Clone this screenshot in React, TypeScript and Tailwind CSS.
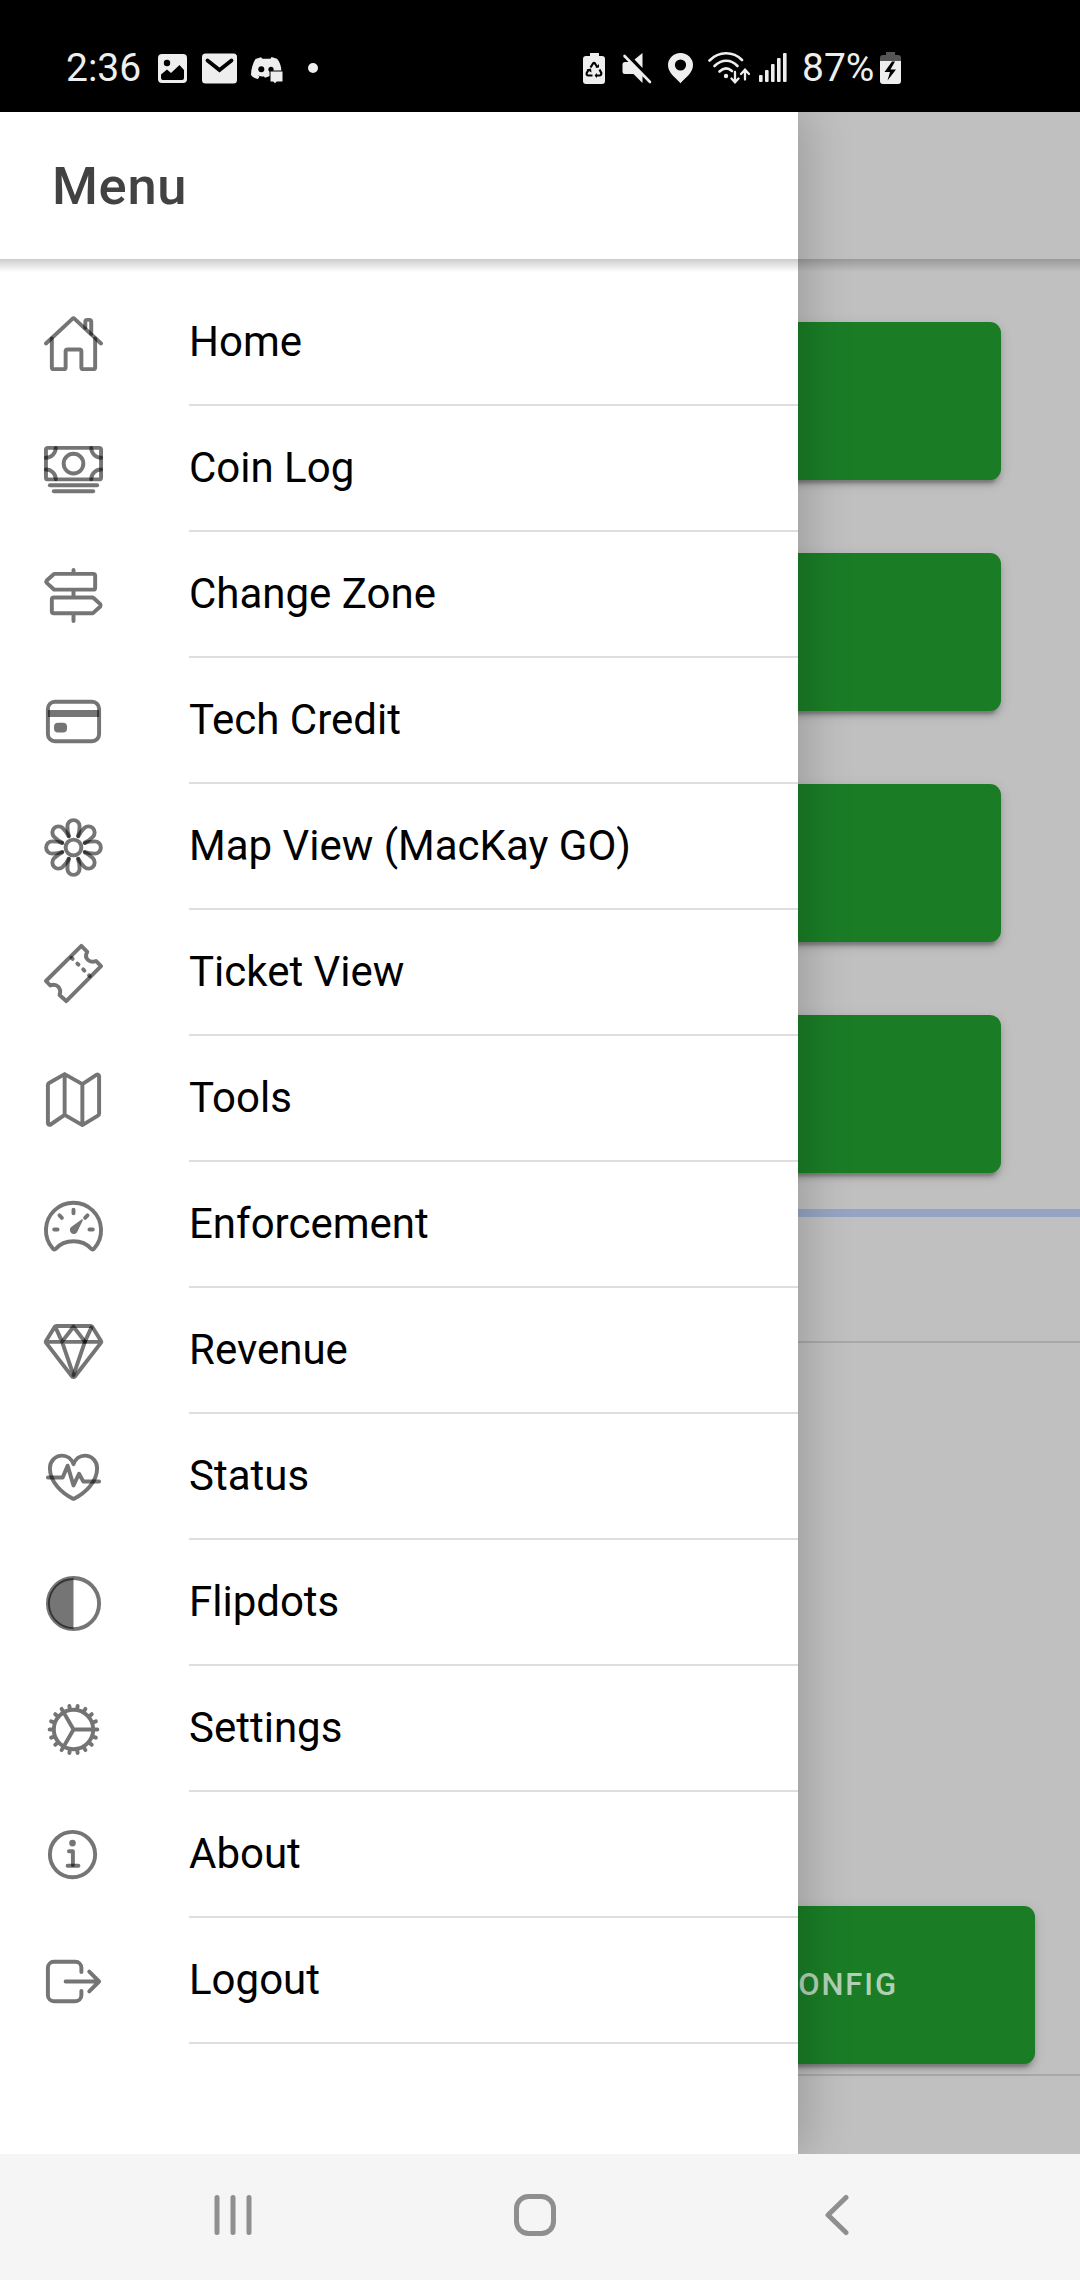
import React from 'react';

const MenuIcon = ({ children }: { children: React.ReactNode }) => (
  <svg
    viewBox="0 0 32 32"
    className="w-[63px] h-[63px] mt-px"
    fill="none"
    stroke="#000"
    strokeOpacity={0.54}
    fillOpacity={0.54}
    strokeWidth={2}
    strokeLinecap="round"
    strokeLinejoin="round"
  >
    {children}
  </svg>
);

const petals = [0, 45, 90, 135, 180, 225, 270, 315];
const teeth = Array.from({ length: 18 }, (_, i) => i * 20);

const menuItems = [
  {
    label: 'Home',
    icon: (
      <>
        <path d="M2 16 15.3 3.6a1 1 0 0 1 1.4 0L30 16" />
        <path d="M5 13.5V28a1 1 0 0 0 1 1h5a1 1 0 0 0 1-1v-8a1 1 0 0 1 1-1h6a1 1 0 0 1 1 1v8a1 1 0 0 0 1 1h5a1 1 0 0 0 1-1V13.5" />
        <path d="M22 8V5a1 1 0 0 1 1-1h1a1 1 0 0 1 1 1v6" />
      </>
    ),
  },
  {
    label: 'Coin Log',
    icon: (
      <>
        <rect x="2" y="5" width="28" height="16" rx="1" />
        <circle cx="16" cy="13" r="5" />
        <path d="M2 10a5 5 0 0 0 5-5" />
        <path d="M30 10a5 5 0 0 1-5-5" />
        <path d="M2 16a5 5 0 0 1 5 5" />
        <path d="M30 16a5 5 0 0 0-5 5" />
        <path d="M4 24h24" />
        <path d="M6 27h20" />
      </>
    ),
  },
  {
    label: 'Change Zone',
    icon: (
      <path d="M16 3v2M16 13v4M16 25v4M6.5 5H26a1 1 0 0 1 1 1v6a1 1 0 0 1-1 1H6.5a1 1 0 0 1-.7-.3L2.4 9.6a1 1 0 0 1 0-1.2l3.4-3.1a1 1 0 0 1 .7-.3zM25.5 17H6a1 1 0 0 0-1 1v6a1 1 0 0 0 1 1h19.5a1 1 0 0 0 .7-.3l3.4-3.1a1 1 0 0 0 0-1.2l-3.4-3.1a1 1 0 0 0-.7-.3z" />
    ),
  },
  {
    label: 'Tech Credit',
    icon: (
      <>
        <rect x="3" y="6" width="26" height="20" rx="3.5" />
        <path d="M3 10.2h26v3.5H3z" fill="#000" stroke="none" />
        <rect x="6.1" y="16.6" width="6.6" height="5" rx="2" fill="#000" stroke="none" />
      </>
    ),
  },
  {
    label: 'Map View (MacKay GO)',
    icon: (
      <>
        <circle cx="16" cy="16" r="4" />
        {petals.map((deg) => (
          <path
            key={deg}
            d="M13.7 10.2C13.2 9 12.9 7 12.9 5.2a3.1 3.1 0 0 1 6.2 0C19.1 7 18.8 9 18.3 10.2"
            transform={`rotate(${deg} 16 16)`}
          />
        ))}
      </>
    ),
  },
  {
    label: 'Ticket View',
    icon: (
      <>
        <path d="M20 2 2 19.8l2.2 2.3c1.2-.5 2.9-.5 4 .6s1.3 2.6.7 4.2L12.3 30 30 12.2l-2.6-2.6c-1.4.7-3 .5-4.1-.5s-1.1-2.7-.3-4.1z" />
        <path d="m15 8 9.3 9.3" strokeDasharray="0.8 3.4" />
      </>
    ),
  },
  {
    label: 'Tools',
    icon: (
      <path d="M3 8.6V28a.9.9 0 0 0 1.4.7l7.1-4.9 9 5.2 7.900-4.8a1.2 1.2 0 0 0 .6-1V4a.8.8 0 0 0-1.2-.6l-7.3 4.800-9-5.1-7.900 4.5a1.2 1.2 0 0 0-.6 1zM11.5 3.1v20.7M20.5 8.2V29" />
    ),
  },
  {
    label: 'Enforcement',
    icon: (
      <>
        <path d="M6.9 27.9a1 1 0 0 1-1.4-.2A14 14 0 1 1 26.5 27.7a1 1 0 0 1-1.4.2C23 25.5 20 24 16 24s-7 1.5-9.1 3.9z" />
        <path d="M6.2 18h1.7M24.1 18h1.7M16 8v1.8M8.9 10.9l1.2 1.2M23.1 10.9l-1.2 1.2" />
        <path d="M20.1 12.9c.4-.3.8 0 .6.5l-2.9 6a2 2 0 1 1-3-2.600z" fill="#000" stroke="none" />
      </>
    ),
  },
  {
    label: 'Revenue',
    icon: (
      <>
        <path d="M7.3 3h17.4a1 1 0 0 1 .8.4L29.9 10.5a1 1 0 0 1 0 1.1L16.8 28.6a1 1 0 0 1-1.6 0L2.1 11.600a1 1 0 0 1 0-1.1L6.5 3.4A1 1 0 0 1 7.3 3zM2.5 11.1h27M7 4l3.2 7.100L16 28" />
        <path d="M25 4 21.8 11 16 28" />
        <path d="M10.2 11 16 3.4 21.8 11" />
      </>
    ),
  },
  {
    label: 'Status',
    icon: (
      <>
        <path d="M16 9.2C15 6.5 12.7 4.9 10.3 4.9 6.6 4.9 4 7.7 4 11.3 4 18.6 10.4 24 15.5 26.7a1 1 0 0 0 1 0C21.6 24 28 18.6 28 11.3 28 7.7 25.4 4.9 21.7 4.9 19.3 4.9 17 6.5 16 9.2z" />
        <path d="M3 16h7.5l2.5-6 3 10 2.8-5.900L21 18h8" />
      </>
    ),
  },
  {
    label: 'Flipdots',
    icon: (
      <>
        <circle cx="16" cy="16" r="13" />
        <path d="M16 3a13 13 0 0 0 0 26z" fill="#000" stroke="none" />
      </>
    ),
  },
  {
    label: 'Settings',
    icon: (
      <g opacity={0.54} strokeOpacity={1}>
        <circle cx="16" cy="16" r="10" />
        <path d="M16 16h10M16 16l-5-8.7M16 16l-5 8.700" />
        {teeth.map((deg) => (
          <path key={deg} d="M26.5 16h1.6" strokeWidth={2} transform={`rotate(${deg} 16 16)`} />
        ))}
      </g>
    ),
  },
  {
    label: 'About',
    icon: (
      <>
        <circle cx="15.5" cy="15.5" r="11.5" />
        <circle cx="15.5" cy="9.7" r="1.7" fill="#000" stroke="none" />
        <path d="M13.7 13.8h2v7" />
        <path d="M13 21.2h5.5" />
      </>
    ),
  },
  {
    label: 'Logout',
    icon: (
      <path d="M20 11.2V9a3 3 0 0 0-3-3H6a3 3 0 0 0-3 3v14a3 3 0 0 0 3 3h11a3 3 0 0 0 3-3v-2.2M12 16h17M24 11l5 5-5 5" />
    ),
  },
];

const StatusBar = () => (
  <div className="flex h-[112px] items-start bg-black pt-[50px] text-[39px] leading-[36px] text-[#eeeeee]">
    <span className="ml-[66px] w-[92px]">2:36</span>
    <svg viewBox="0 0 29 36" className="w-[29px] h-[36px]" fill="#eee">
      <rect y="4" width="29" height="29" rx="4" />
      <circle cx="9" cy="13" r="3.2" fill="#000" />
      <path d="M3 24.500l6-5 4 3.500 8.500-8 4.500 5V28a2 2 0 0 1-2 2H5a2 2 0 0 1-2-2z" fill="#000" />
    </svg>
    <svg viewBox="0 0 35 36" className="ml-[15px] w-[35px] h-[36px]" fill="#eee">
      <rect y="3.5" width="35" height="30" rx="3.5" />
      <path d="M5.5 10.5 17.5 20l12-9.5" fill="none" stroke="#000" strokeWidth="3.8" strokeLinecap="round" />
    </svg>
    <svg viewBox="0 0 32 36" className="ml-[14px] w-[32px] h-[36px]" fill="#eee">
      <path d="M10 7.300 4.500 9C2 13 0 19 0 25c2 2.500 4.500 3.500 7 4l1.500-2.500-2-1.200c2 .8 4 1.200 6.500 1.300l1 1.200L19 26v-4.500h11.500C30.300 16 28.500 11.500 26 8.800L20.500 7l-1 1.800h-8z" />
      <circle cx="10.3" cy="19.3" r="3" fill="#000" />
      <circle cx="20" cy="19.3" r="2.6" fill="#000" />
      <path d="M19 21h13v11h-6.500l-1.500 2.500-1.500-2.500H19z" stroke="#000" />
    </svg>
    <svg viewBox="0 0 10 36" className="ml-[25px] w-[10px] h-[36px]" fill="#eee">
      <circle cx="5" cy="18" r="5" />
    </svg>

    <svg viewBox="0 0 22 36" className="ml-[265px] w-[22px] h-[36px]" fill="#eee">
      <path d="M7 3h9v3h3a3 3 0 0 1 3 3v22a3 3 0 0 1-3 3H3a3 3 0 0 1-3-3V9a3 3 0 0 1 3-3h4z" />
      <g fill="none" stroke="#000" strokeWidth="2.2" strokeLinejoin="round">
        <path d="M7.5 17.5 10 13.5q1-1.2 2 0l2.5 4" />
        <path d="M16.5 19.5l1.8 3.5q.3 2.5-2 2.5h-3.5" />
        <path d="M9.5 25.5H5.5q-2.3-.2-1.8-2.5l2-3.5" />
      </g>
      <path d="M12.5 17.5h3.5V14zM14 23v5l-2.5-2.5zM3.5 19.5 8 18.5l.5 4z" fill="#000" />
    </svg>
    <svg viewBox="0 0 30 36" className="ml-[17px] w-[30px] h-[36px]" fill="#eee">
      <path d="M3 12h6L20.5 24v9l-9-9H3a2.500 2.500 0 0 1-2.500-2.500v-7A2.500 2.500 0 0 1 3 12zM12.500 9.500l8-6.500v15z" />
      <path d="M2.5 6 28 32" stroke="#eee" strokeWidth="2.6" strokeLinecap="round" />
    </svg>
    <svg viewBox="0 0 25 36" className="ml-[16px] w-[25px] h-[36px]" fill="#eee">
      <path d="M12.5 3A12.3 12.3 0 0 0 0 15.3C0 23 8 28 12.5 33.3 17 28 25 23 25 15.3A12.3 12.3 0 0 0 12.5 3z" />
      <circle cx="12.5" cy="15" r="5.6" fill="#000" />
    </svg>
    <svg viewBox="0 0 42 36" className="ml-[15px] w-[42px] h-[36px]" fill="none" stroke="#eee" strokeLinecap="round">
      <path d="M1.5 10.5C11 1 25 1 34 10" strokeWidth="2.6" />
      <path d="M6.5 16C13.5 9 23 9 29.5 16" strokeWidth="2.6" />
      <path d="M11.5 21.5C15.5 17.5 20 17.5 24 21" strokeWidth="2.6" />
      <circle cx="18" cy="26" r="2.2" fill="#eee" stroke="none" />
      <path d="M27 22v10M23.5 28.5 27 32.3l3.5-3.8M37 29.5V20M33 24l4-4.3 4 4.3" strokeWidth="2.3" />
    </svg>
    <svg viewBox="0 0 28 36" className="ml-[9px] w-[28px] h-[36px]" fill="#eee">
      <rect y="25" width="3.6" height="7" rx="1" />
      <rect x="6" y="20" width="3.6" height="12" rx="1" />
      <rect x="12" y="14" width="3.6" height="18" rx="1" />
      <rect x="18" y="8" width="3.6" height="24" rx="1" />
      <rect x="24" y="3" width="3.6" height="29" rx="1" />
    </svg>
    <span className="ml-[15px] w-[78px]">87%</span>
    <svg viewBox="0 0 21 36" className="w-[21px] h-[36px]">
      <path d="M6 2h9v3h3a3 3 0 0 1 3 3v4H0V8a3 3 0 0 1 3-3h3z" fill="#555" />
      <path d="M0 11h21v20a3 3 0 0 1-3 3H3a3 3 0 0 1-3-3z" fill="#eee" />
      <path d="M12 11.5 4.5 22H10l-2.5 8.5L16 19.5h-5.5L15 11.5z" fill="#000" />
    </svg>
  </div>
);

const tile =
  'shrink-0 h-[158px] rounded-[11px] bg-[#1a7d26] shadow-[0_8px_3px_-5px_rgba(0,0,0,0.2),0_5px_5px_0_rgba(0,0,0,0.14),0_3px_13px_0_rgba(0,0,0,0.12)]';

// Page behind the open drawer, already dimmed by the backdrop
const Page = () => (
  <div className="flex h-full flex-col">
    <div className="h-[147px] shrink-0" />
    <div className="h-[13px] shrink-0 bg-linear-to-b from-black/20 to-transparent" />
    <div className="mt-[50px] flex shrink-0 flex-col gap-[73px] px-[79px]">
      <div className={tile} />
      <div className={tile} />
      <div className={tile} />
      <div className={tile} />
    </div>
    <div className="mt-[36px] h-[8px] shrink-0 bg-[#95a4c3]" />
    <div className="mt-[124px] h-[2px] shrink-0 bg-[#a8a8a8]" />
    <div className="mt-auto mb-[78px] flex h-[170px] shrink-0 justify-end border-b-2 border-[#a8a8a8] pr-[45px]">
      <div className={`${tile} flex w-[484px] items-center justify-end pr-[137px] text-[31px] font-medium tracking-[1.9px] text-[#b2d0b5]`}>
        CONFIG
      </div>
    </div>
  </div>
);

const Drawer = () => (
  <aside className="absolute top-0 left-0 flex h-full w-[798px] flex-col bg-white shadow-[10px_0_42px_rgba(0,0,0,0.18)]">
    <header className="flex h-[147px] shrink-0 items-center px-[52px] pt-[2px]">
      <h1 className="text-[52.5px] font-medium tracking-[0.7px] text-[#424242]">Menu</h1>
    </header>
    <div className="h-[13px] shrink-0 bg-linear-to-b from-black/20 to-transparent" />
    <nav className="pt-[8px]">
      {menuItems.map((item) => (
        <a key={item.label} className="flex h-[126px] items-center pl-[42px]">
          <MenuIcon>{item.icon}</MenuIcon>
          <span className="ml-[84px] flex h-full flex-1 items-center border-b-2 border-[#dedede] pb-px text-[42px] text-black">
            {item.label}
          </span>
        </a>
      ))}
    </nav>
  </aside>
);

const NavBar = () => (
  <div className="flex h-[126px] items-center justify-between bg-[#f5f5f5] pr-[222px] pb-[4px] pl-[212px]">
    <svg viewBox="0 0 42 42" className="w-[42px] h-[42px]" fill="none" stroke="#8f8f8f" strokeWidth="5" strokeLinecap="round">
      <path d="M5 3.5v35M21 3.5v35M37 3.5v35" />
    </svg>
    <svg viewBox="0 0 42 42" className="w-[42px] h-[42px]" fill="none" stroke="#8f8f8f" strokeWidth="5">
      <rect x="2.5" y="2.5" width="37" height="37" rx="12" />
    </svg>
    <svg viewBox="0 0 42 42" className="w-[42px] h-[42px]" fill="none" stroke="#8f8f8f" strokeWidth="5" strokeLinecap="round" strokeLinejoin="round">
      <path d="M30 3.5 12 21l18 17.5" />
    </svg>
  </div>
);

export default function App() {
  return (
    <div className="h-[2280px] w-[1080px] overflow-hidden font-[Roboto,sans-serif]">
      <StatusBar />
      <main className="relative h-[2042px] overflow-hidden bg-[#c0c0c0]">
        <Page />
        <Drawer />
      </main>
      <NavBar />
    </div>
  );
}
